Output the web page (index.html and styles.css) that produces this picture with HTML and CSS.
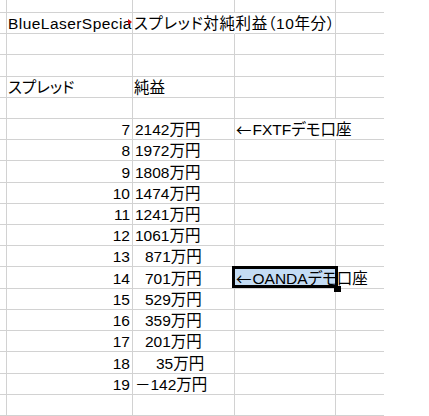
FILE: index.html
```html
<!DOCTYPE html>
<html lang="ja">
<head>
<meta charset="utf-8">
<title>BlueLaserSpecial スプレッド対純利益</title>
<link rel="stylesheet" href="styles.css">
</head>
<body>
<div class="sheet">
  <div class="row top"><div class="c"></div><div class="c"></div><div class="c"></div><div class="c"></div><div class="c"></div></div>
  <div class="row"><div class="c"></div><div class="c clip mark wide">BlueLaserSpecial</div><div class="c nr title">スプレッド対純利益（10年分）</div><div class="c"></div><div class="c"></div></div>
  <div class="row"><div class="c"></div><div class="c"></div><div class="c"></div><div class="c"></div><div class="c"></div></div>
  <div class="row tall"><div class="c"></div><div class="c"></div><div class="c"></div><div class="c"></div><div class="c"></div></div>
  <div class="row"><div class="c"></div><div class="c">スプレッド</div><div class="c">純益</div><div class="c"></div><div class="c"></div></div>
  <div class="row"><div class="c"></div><div class="c"></div><div class="c"></div><div class="c"></div><div class="c"></div></div>
  <div class="row"><div class="c"></div><div class="c num">7</div><div class="c v4">2142万円</div><div class="c nr"><span class="arr">←</span>FXTFデモ口座</div><div class="c"></div></div>
  <div class="row"><div class="c"></div><div class="c num">8</div><div class="c v4">1972万円</div><div class="c"></div><div class="c"></div></div>
  <div class="row tall"><div class="c"></div><div class="c num">9</div><div class="c v4">1808万円</div><div class="c"></div><div class="c"></div></div>
  <div class="row"><div class="c"></div><div class="c num">10</div><div class="c v4">1474万円</div><div class="c"></div><div class="c"></div></div>
  <div class="row"><div class="c"></div><div class="c num">11</div><div class="c v4">1241万円</div><div class="c"></div><div class="c"></div></div>
  <div class="row"><div class="c"></div><div class="c num">12</div><div class="c v4">1061万円</div><div class="c"></div><div class="c"></div></div>
  <div class="row"><div class="c"></div><div class="c num">13</div><div class="c v3">871万円</div><div class="c"></div><div class="c"></div></div>
  <div class="row tall"><div class="c"></div><div class="c num">14</div><div class="c v3">701万円</div><div class="c nr selected"><span class="arr">←</span>OANDAデモ口座<span class="sel-border"></span><span class="sel-handle"></span></div><div class="c"></div></div>
  <div class="row"><div class="c"></div><div class="c num">15</div><div class="c v3">529万円</div><div class="c"></div><div class="c"></div></div>
  <div class="row"><div class="c"></div><div class="c num">16</div><div class="c v3">359万円</div><div class="c"></div><div class="c"></div></div>
  <div class="row"><div class="c"></div><div class="c num">17</div><div class="c v3">201万円</div><div class="c"></div><div class="c"></div></div>
  <div class="row tall"><div class="c"></div><div class="c num">18</div><div class="c v2">35万円</div><div class="c"></div><div class="c"></div></div>
  <div class="row"><div class="c"></div><div class="c num">19</div><div class="c v4">－142万円</div><div class="c"></div><div class="c"></div></div>
  <div class="row"><div class="c"></div><div class="c"></div><div class="c"></div><div class="c"></div><div class="c"></div></div>
</div>
</body>
</html>
```
FILE: styles.css
```css
html, body {
  margin: 0;
  padding: 0;
  background: #ffffff;
}
body {
  width: 429px;
  height: 416px;
  overflow: hidden;
  font-family: "Liberation Sans", "Noto Sans CJK JP", sans-serif;
  font-size: 15.5px;
  font-feature-settings: "palt";
  color: #000000;
}
.sheet {
  width: 384px;
  display: flex;
  flex-direction: column;
}
.row {
  display: grid;
  grid-template-columns: 7px 126px 102px 101px 48px;
  height: 21px;
}
.row.top { height: 13px; }
.row.tall { height: 22px; }
.c {
  box-sizing: border-box;
  min-width: 0;
  border-right: 1px solid #d2d2d2;
  border-bottom: 1px solid #d2d2d2;
  display: flex;
  align-items: flex-end;
  white-space: nowrap;
  line-height: 17px;
  padding: 0 0 1px 1px;
}
.c:last-child { border-right: none; }
.c.nr { border-right-color: transparent; }
.clip { overflow: hidden; }
.wide { letter-spacing: 0.45px; }
.title { letter-spacing: 0.6px; }
.arr {
  font-family: "Noto Sans CJK JP", sans-serif;
  font-feature-settings: normal;
  margin-right: 1px;
}
.mark { position: relative; }
.mark::after {
  content: "";
  position: absolute;
  right: 0;
  top: 6px;
  width: 0;
  height: 0;
  border-left: 4px solid #d01010;
  border-top: 3px solid transparent;
  border-bottom: 3px solid transparent;
}
.num {
  justify-content: flex-end;
  padding-right: 2px;
}
.v4 { padding-left: 2px; }
.v3 { padding-left: 12px; }
.v2 { padding-left: 23px; }
.selected {
  position: relative;
  background: #c4dcf4;
  background-clip: padding-box;
}
.sel-border {
  position: absolute;
  left: -3px;
  top: -1px;
  right: -3px;
  bottom: 0;
  border: 3px solid #000000;
}
.sel-handle {
  position: absolute;
  left: 99px;
  top: 19px;
  width: 7px;
  height: 6px;
  background: #000000;
}
```
